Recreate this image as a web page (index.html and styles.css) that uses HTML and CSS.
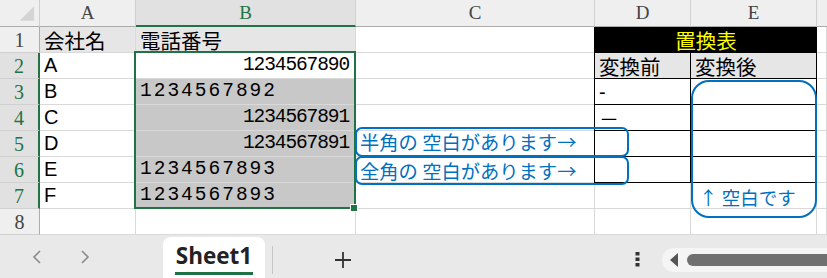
FILE: index.html
```html
<!DOCTYPE html>
<html lang="ja">
<head>
<meta charset="utf-8">
<link rel="stylesheet" href="styles.css">
</head>
<body>
<div class="app">
  <div class="sheet">
    <div class="grid">
      <div class="c corner"><svg width="40" height="27" viewBox="0 0 40 27"><polygon points="35,7 35,22 20,22" fill="#d4d4d4"/></svg></div>
      <div class="c ch">A</div>
      <div class="c ch sel">B</div>
      <div class="c ch">C</div>
      <div class="c ch">D</div>
      <div class="c ch">E</div>
      <div class="c ch last"></div>

      <div class="c rh">1</div>
      <div class="c fill">会社名</div>
      <div class="c fill">電話番号</div>
      <div class="c"></div>
      <div class="c title">置換表</div>
      <div class="c"></div>

      <div class="c rh sel">2</div>
      <div class="c lat">A</div>
      <div class="c num right">1234567890</div>
      <div class="c"></div>
      <div class="c t tl fill">変換前</div>
      <div class="c t fill">変換後</div>
      <div class="c"></div>

      <div class="c rh sel">3</div>
      <div class="c lat">B</div>
      <div class="c num sp shade">1234567892</div>
      <div class="c"></div>
      <div class="c t tl"><span class="dash">-</span></div>
      <div class="c t"></div>
      <div class="c"></div>

      <div class="c rh sel">4</div>
      <div class="c lat">C</div>
      <div class="c num right shade">1234567891</div>
      <div class="c"></div>
      <div class="c t tl"><span class="dash2">－</span></div>
      <div class="c t"></div>
      <div class="c"></div>

      <div class="c rh sel">5</div>
      <div class="c lat">D</div>
      <div class="c num right shade">1234567891</div>
      <div class="c"></div>
      <div class="c t tl"></div>
      <div class="c t"></div>
      <div class="c"></div>

      <div class="c rh sel">6</div>
      <div class="c lat">E</div>
      <div class="c num sp shade">1234567893</div>
      <div class="c"></div>
      <div class="c t tl"></div>
      <div class="c t"></div>
      <div class="c"></div>

      <div class="c rh sel">7</div>
      <div class="c lat">F</div>
      <div class="c num sp shade">1234567893</div>
      <div class="c"></div>
      <div class="c"></div>
      <div class="c"></div>
      <div class="c"></div>

      <div class="c rh">8</div>
      <div class="c"></div>
      <div class="c"></div>
      <div class="c"></div>
      <div class="c"></div>
      <div class="c"></div>
      <div class="c"></div>
    </div>

    <div class="selection"></div>
    <div class="handle"></div>
    <div class="callout c1">半角の 空白があります→</div>
    <div class="callout c2">全角の 空白があります→</div>
    <div class="callout c3">↑ 空白です</div>
  </div>

  <div class="tabbar">
    <div class="nav">
      <svg class="prev" width="10" height="14" viewBox="0 0 10 14"><polyline points="8,1 2,7 8,13" fill="none" stroke="#8a8a8a" stroke-width="1.6"/></svg>
      <svg class="next" width="10" height="14" viewBox="0 0 10 14"><polyline points="2,1 8,7 2,13" fill="none" stroke="#8a8a8a" stroke-width="1.6"/></svg>
    </div>
    <div class="tab"><span class="tabname">Sheet1</span></div>
    <div class="sep"></div>
    <svg class="plus" width="18" height="18" viewBox="0 0 18 18"><path d="M9 1V17M1 9H17" stroke="#333" stroke-width="1.8"/></svg>
    <svg class="kebab" width="5" height="15" viewBox="0 0 5 15"><rect x="0.5" y="0" width="4" height="3.5" fill="#333"/><rect x="0.5" y="5.5" width="4" height="3.5" fill="#333"/><rect x="0.5" y="11" width="4" height="3.5" fill="#333"/></svg>
    <div class="scroll">
      <svg class="arrow" width="10" height="14" viewBox="0 0 10 14"><polygon points="9,0 9,14 1,7" fill="#555"/></svg>
      <div class="thumb"></div>
    </div>
  </div>
</div>
</body>
</html>
```

FILE: styles.css
```css
html, body {
  margin: 0;
  padding: 0;
}
body {
  width: 827px;
  height: 278px;
  overflow: hidden;
  background: #fff;
  font-family: "Noto Sans CJK JP", "Noto Sans", sans-serif;
}
.app {
  display: flex;
  flex-direction: column;
  width: 827px;
  height: 278px;
}
.sheet {
  position: relative;
  height: 235px;
  overflow: hidden;
}
.grid {
  display: grid;
  grid-template-columns: 40px 96px 220px 239px 96px 126px 10px;
  grid-template-rows: 27px repeat(8, 26px);
}
.c {
  box-sizing: border-box;
  border-right: 1px solid #d9d9d9;
  border-bottom: 1px solid #d9d9d9;
  display: flex;
  align-items: flex-end;
  padding: 0 3px 0 4px;
  font-size: 20.5px;
  line-height: 23px;
  color: #000;
  white-space: nowrap;
}
.lat {
  font-family: "Liberation Sans", sans-serif;
  font-size: 20px;
  padding-bottom: 1px;
}
.corner {
  padding: 0;
  background: #efefef;
  border-right: 1px solid #cfcfcf;
  border-bottom: 1px solid #acacac;
}
.ch {
  background: #efefef;
  border-right: 1px solid #d0d0d0;
  border-bottom: 1px solid #acacac;
  justify-content: center;
  align-items: center;
  padding: 0;
  font-family: "Liberation Serif", serif;
  font-size: 19px;
  color: #444;
  line-height: 24px;
}
.ch.sel {
  background: #e1e1e1;
  color: #217346;
  border-bottom: 2px solid #217346;
}
.ch.last {
  border-right: none;
}
.rh {
  background: #efefef;
  border-right: 1px solid #acacac;
  border-bottom: 1px solid #d0d0d0;
  justify-content: center;
  padding: 0;
  font-family: "Liberation Serif", serif;
  font-size: 20px;
  color: #444;
}
.rh.sel {
  background: #e1e1e1;
  color: #217346;
  border-right: 2px solid #217346;
}
.fill {
  background: #e7e6e6;
}
.shade {
  background: #c8c8c8;
}
.num {
  font-family: "Liberation Mono", monospace;
  font-size: 19.5px;
  letter-spacing: -1.1px;
  padding-bottom: 1px;
}
.right {
  justify-content: flex-end;
  padding-right: 6px;
}
.num.sp {
  letter-spacing: 2px;
}
.title {
  grid-column: span 2;
  background: #000;
  color: #ffff00;
  justify-content: center;
  border-right: 1px solid #000;
  border-bottom: 1px solid #000;
  box-shadow: -1px 0 0 #000;
}
.t {
  border-right: 1px solid #000;
  border-bottom: 1px solid #000;
}
.tl {
  box-shadow: -1px 0 0 #000;
}
.dash {
  font-family: "Liberation Sans", sans-serif;
  font-size: 20px;
}
.dash2 {
  font-size: 20px;
}
.selection {
  position: absolute;
  left: 134px;
  top: 51px;
  width: 222px;
  height: 158px;
  box-sizing: border-box;
  border: 2px solid #217346;
}
.handle {
  position: absolute;
  left: 350px;
  top: 204px;
  width: 6px;
  height: 6px;
  background: #217346;
  border: 1px solid #fff;
}
.callout {
  position: absolute;
  box-sizing: border-box;
  border: 2px solid #0070c0;
  color: #0070c0;
  font-size: 19.3px;
  display: flex;
  align-items: center;
  padding-left: 3px;
  white-space: nowrap;
}
.c1 {
  left: 355px;
  top: 127px;
  width: 274px;
  height: 30px;
  border-radius: 7px;
}
.c2 {
  left: 355px;
  top: 156px;
  width: 274px;
  height: 29px;
  border-radius: 7px;
}
.c3 {
  left: 691px;
  top: 80px;
  width: 126px;
  height: 138px;
  border-radius: 18px;
  align-items: flex-end;
  padding-left: 6px;
  padding-bottom: 6px;
  font-size: 18.5px;
}
.tabbar {
  display: flex;
  align-items: center;
  height: 43px;
  background: #e9e9e9;
}
.nav {
  display: flex;
  align-items: center;
  width: 163px;
  height: 100%;
}
.prev {
  margin-left: 32px;
}
.next {
  margin-left: 38px;
}
.tab {
  align-self: flex-end;
  width: 102px;
  height: 41px;
  background: #fff;
  border-radius: 8px 8px 0 0;
  display: flex;
  justify-content: center;
  align-items: flex-end;
  box-sizing: border-box;
  padding-bottom: 3px;
}
.tabname {
  font-family: "Open Sans", "Noto Sans", sans-serif;
  font-weight: 700;
  font-size: 22.5px;
  line-height: 28px;
  color: #222;
  border-bottom: 3px solid #1e7145;
  padding: 0 1px 2px;
}
.sep {
  width: 1px;
  height: 28px;
  background: #c6c6c6;
  margin-left: 7px;
  margin-top: 6px;
}
.plus {
  margin-left: 61px;
  margin-top: 6px;
}
.kebab {
  margin-left: 283px;
  margin-top: 6px;
}
.scroll {
  flex: 1;
  margin-left: 22px;
  margin-top: 6px;
  height: 24px;
  background: #f5f5f5;
  border-radius: 12px 0 0 12px;
  display: flex;
  align-items: center;
}
.arrow {
  margin-left: 7px;
}
.thumb {
  flex: 1;
  margin-left: 8px;
  height: 12px;
  background: #707070;
  border-radius: 6px 0 0 6px;
}
```
